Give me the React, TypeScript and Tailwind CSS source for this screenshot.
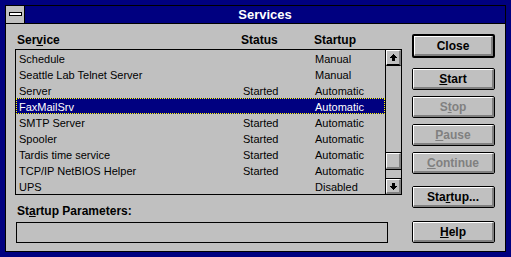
import React from "react";

const rows = [
  { name: "Schedule", status: "", startup: "Manual" },
  { name: "Seattle Lab Telnet Server", status: "", startup: "Manual" },
  { name: "Server", status: "Started", startup: "Automatic" },
  { name: "FaxMailSrv", status: "", startup: "Automatic", selected: true },
  { name: "SMTP Server", status: "Started", startup: "Automatic" },
  { name: "Spooler", status: "Started", startup: "Automatic" },
  { name: "Tardis time service", status: "Started", startup: "Automatic" },
  { name: "TCP/IP NetBIOS Helper", status: "Started", startup: "Automatic" },
  { name: "UPS", status: "", startup: "Disabled" },
];

function Arrow({ down }: { down?: boolean }) {
  return (
    <svg width="7" height="7" viewBox="0 0 7 7" shapeRendering="crispEdges" style={{ transform: down ? "rotate(180deg)" : undefined }}>
      <rect x="3" y="0" width="1" height="1" fill="#000" />
      <rect x="2" y="1" width="3" height="1" fill="#000" />
      <rect x="1" y="2" width="5" height="1" fill="#000" />
      <rect x="0" y="3" width="7" height="1" fill="#000" />
      <rect x="2" y="4" width="3" height="3" fill="#000" />
    </svg>
  );
}

function Bevel({ children, className = "" }: { children?: React.ReactNode; className?: string }) {
  return (
    <div className={"bg-[#c0c0c0] border-t border-l border-t-white border-l-white border-r-2 border-b-2 border-r-[#808080] border-b-[#808080] flex items-center justify-center " + className}>
      {children}
    </div>
  );
}

function Button({ children, def, disabled, className = "" }: { children: React.ReactNode; def?: boolean; disabled?: boolean; className?: string }) {
  return (
    <div className={(def ? "border-2 h-[24px] " : "border h-[22px] ") + "border-black rounded-[2px] w-[83px] flex " + className}>
      <Bevel className={"flex-1 text-[12px] font-bold leading-none " + (disabled ? "text-[#808080]" : "text-black")}>
        {children}
      </Bevel>
    </div>
  );
}

export default function App() {
  return (
    <div className="w-[511px] h-[257px] bg-[#000080] p-[5px] font-['Liberation_Sans',Arial,sans-serif] text-black">
      <div className="w-full h-full border border-black flex flex-col bg-[#c0c0c0]">
        <div className="h-[18px] flex border-b border-black shrink-0">
          <div className="w-[19px] border-r border-black bg-[#c0c0c0] flex items-center justify-center">
            <div className="w-[13px] h-[4px] bg-white border border-black -mt-[1px]" />
          </div>
          <div className="flex-1 bg-[#000080] text-white font-bold text-[13px] flex items-center justify-center leading-none">
            Services
          </div>
        </div>
        <div className="flex-1 flex pl-[9px]">
          <div className="w-[387px] pt-[9px] flex flex-col">
            <div className="h-[14px] leading-[14px] mb-[2px] flex pl-[2px] text-[12px] font-bold">
              <div className="w-[224px]">
                Ser<u>v</u>ice
              </div>
              <div className="w-[73px]">Status</div>
              <div>Startup</div>
            </div>
            <div className="h-[146px] border border-black flex">
              <div className="flex-1 flex flex-col">
                {rows.map((r) => (
                  <div
                    key={r.name}
                    className={
                      "h-[16px] flex items-center text-[11px] leading-[16px] pt-[1px] " +
                      (r.selected
                        ? "bg-[#000080] text-white border border-dotted border-[#ffff00] pl-[2px]"
                        : "pl-[3px]")
                    }
                  >
                    <div className="w-[224px] whitespace-nowrap">{r.name}</div>
                    <div className="w-[72px]">{r.status}</div>
                    <div>{r.startup}</div>
                  </div>
                ))}
              </div>
              <div className="w-[16px] border-l border-black flex flex-col">
                <Bevel className="h-[16px] border-b-black">
                  <Arrow />
                </Bevel>
                <div className="h-[86px]" />
                <div className="h-[18px] border-y border-black flex">
                  <Bevel className="flex-1" />
                </div>
                <div className="flex-1" />
                <div className="h-[16px] border-t border-black flex">
                  <Bevel className="flex-1">
                    <Arrow down />
                  </Bevel>
                </div>
              </div>
            </div>
            <div className="mt-[9px] h-[14px] leading-[14px] pl-[2px] text-[12px] font-bold mb-[4px]">
              St<u>a</u>rtup Parameters:
            </div>
            <div className="ml-[1px] w-[372px] h-[21px] border border-black" />
          </div>
          <div className="ml-[10px] pt-[10px] flex flex-col">
            <Button def>Close</Button>
            <Button className="mt-[10px]">
              <u>S</u>tart
            </Button>
            <Button disabled className="mt-[6px]">
              S<u>t</u>op
            </Button>
            <Button disabled className="mt-[6px]">
              <u>P</u>ause
            </Button>
            <Button disabled className="mt-[6px]">
              <u>C</u>ontinue
            </Button>
            <Button className="mt-[12px]">
              Sta<u>r</u>tup...
            </Button>
            <Button className="mt-[13px]">
              <u>H</u>elp
            </Button>
          </div>
        </div>
      </div>
    </div>
  );
}
